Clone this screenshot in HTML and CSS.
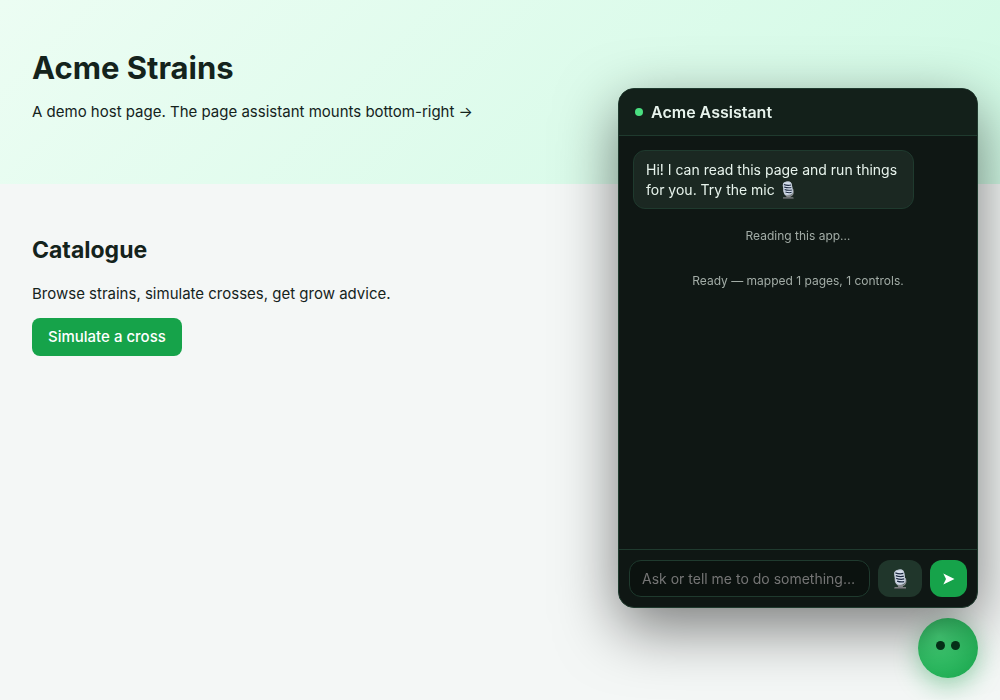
FILE: index.html
```html
<!DOCTYPE html>
<html lang="en">
<head>
    <meta charset="UTF-8">
    <meta name="viewport" content="width=device-width, initial-scale=1.0">
    <title>Acme Strains</title>
    <link rel="stylesheet" href="styles.css">
</head>
<body>

    <!-- Microphone symbol, used in the greeting and on the mic button -->
    <svg class="defs" width="0" height="0" aria-hidden="true">
        <symbol id="mic" viewBox="0 0 20 20">
            <path d="M5 9.500c.3 4.500 1.800 7 5.500 7.300 3.500.2 5.500-1.800 5.300-4.800l-.5-3" fill="none" stroke="#8a8c90" stroke-width="1.300"/>
            <path d="M8.500 15.500h4l.5 2.500H8z" fill="#85888b"/>
            <path d="M4.500 18h11.500v1.800H4.500z" fill="#7b7e80"/>
            <path d="M4.500 19h11.500v.8H4.500z" fill="#4c5052"/>
            <g transform="rotate(-9 10 8)">
                <rect x="4.800" y="0.600" width="10" height="15" rx="4" fill="#d5deeb"/>
                <path d="M6 3.200q4 2.200 8 1.800M6 6q4 2.200 8 1.800M6 8.800q4 2.200 8 1.800M6.500 11.600q3.500 2 7 1.600" fill="none" stroke="#1b2940" stroke-width="1.200"/>
                <rect x="5.200" y="1" width="9.200" height="14.200" rx="3.600" fill="none" stroke="#b9c3d1" stroke-width="0.800"/>
            </g>
        </symbol>
    </svg>

    <header class="hero">
        <h1>Acme Strains</h1>
        <p>A demo host page. The page assistant mounts bottom-right →</p>
    </header>

    <main class="catalogue">
        <h2>Catalogue</h2>
        <p>Browse strains, simulate crosses, get grow advice.</p>
        <button type="button" class="cta">Simulate a cross</button>
    </main>

    <!-- Assistant launcher -->
    <button type="button" class="orb" aria-label="Toggle assistant">
        <span class="eye"></span>
        <span class="eye"></span>
    </button>

    <!-- Assistant panel -->
    <section class="panel">
        <div class="panel-header">
            <span class="dot"></span>
            <span>Acme Assistant</span>
        </div>
        <div class="messages">
            <div class="bubble">Hi! I can read this page and run things for you. Try the mic <svg class="mic-inline" aria-hidden="true"><use href="#mic"/></svg></div>
            <div class="status">Reading this app…</div>
            <div class="status">Ready — mapped 1 pages, 1 controls.</div>
        </div>
        <form class="composer">
            <input type="text" class="ask" aria-label="Message" placeholder="Ask or tell me to do something…">
            <button type="button" class="mic-button" aria-label="Speak">
                <svg class="mic-icon" aria-hidden="true"><use href="#mic"/></svg>
            </button>
            <button type="submit" class="send-button" aria-label="Send">
                <svg width="12" height="12" viewBox="0 0 12 12" aria-hidden="true">
                    <path d="M0.300 0.500 11.500 6 0.300 11.500 3 6z" fill="#fff"/>
                </svg>
            </button>
        </form>
    </section>

</body>
</html>
```
FILE: styles.css
```css
body {
    font-family: Inter, "Liberation Sans", sans-serif;
    font-size: 15px;
    line-height: 19px;
    background-color: #f4f7f6;
    color: #14231c;
    margin: 0;
}
.defs {
    position: absolute;
}
.hero {
    padding: 48px 32px;
    background: linear-gradient(135deg, #ecfdf3, #d1fae5);
}
h1 {
    margin: 0;
    font-size: 31px;
    line-height: 40px;
}
h2 {
    margin: 20px 0 19px;
    font-size: 23px;
    line-height: 29px;
}
p {
    margin: 14px 0 15px;
}
.catalogue {
    padding: 32px;
    display: flow-root;
}
button {
    border: none;
    font-family: inherit;
    cursor: pointer;
}
.cta {
    padding: 10px 16px;
    border-radius: 8px;
    background-color: #16a34a;
    color: #fff;
    font-size: 15px;
    font-weight: 500;
    line-height: 18px;
}

/* Launcher */
.orb {
    position: fixed;
    right: 22px;
    bottom: 22px;
    width: 60px;
    height: 60px;
    padding: 0 0 5px;
    display: flex;
    align-items: center;
    justify-content: center;
    gap: 6px;
    border-radius: 50%;
    background: radial-gradient(circle at 35% 30%, #4ade80, #16a34a);
    box-shadow: 0 8px 24px rgba(22, 163, 74, 0.4);
}
.eye {
    width: 9px;
    height: 9px;
    border-radius: 50%;
    background-color: #06351b;
}

/* Panel */
.panel {
    position: fixed;
    right: 22px;
    bottom: 92px;
    width: 360px;
    height: 520px;
    box-sizing: border-box;
    display: flex;
    flex-direction: column;
    overflow: hidden;
    border: 1px solid #1f3a2e;
    border-radius: 16px;
    background-color: #0f1714;
    color: #e7f3ec;
    box-shadow: 0 20px 60px rgba(0, 0, 0, 0.5);
}
.panel-header {
    display: flex;
    align-items: center;
    gap: 8px;
    padding: 14px 16px;
    background-color: #13201a;
    border-bottom: 1px solid #1f3a2e;
    font-size: 16px;
    font-weight: 600;
    line-height: 18px;
}
.dot {
    width: 8px;
    height: 8px;
    border-radius: 50%;
    background-color: #4ade80;
}
.messages {
    flex: 1;
    display: flex;
    flex-direction: column;
    gap: 10px;
    padding: 14px;
}
.bubble {
    align-self: flex-start;
    max-width: 85%;
    box-sizing: border-box;
    padding: 9px 12px 8px;
    border: 1px solid #1f3a2e;
    border-radius: 12px;
    background-color: #1b2822;
    font-size: 14px;
    line-height: 20px;
}
.mic-inline {
    width: 18px;
    height: 18px;
    vertical-align: -4px;
}
.status {
    padding: 8px 12px 10px;
    text-align: center;
    font-size: 12px;
    line-height: 17px;
    color: #a2aca6;
}
.composer {
    display: flex;
    gap: 8px;
    padding: 10px;
    border-top: 1px solid #1f3a2e;
}
.ask {
    flex: 1;
    min-width: 0;
    height: 37px;
    box-sizing: border-box;
    padding: 0 12px;
    border: 1px solid #1f3a2e;
    border-radius: 12px;
    background-color: #0b120f;
    color: #e7f3ec;
    font-family: inherit;
    font-size: 14px;
}
.ask::placeholder {
    color: #757575;
}
.mic-button,
.send-button {
    display: flex;
    align-items: center;
    justify-content: center;
    padding: 0;
    border-radius: 12px;
}
.mic-button {
    width: 44px;
    background-color: #20362b;
}
.mic-icon {
    width: 20px;
    height: 20px;
}
.send-button {
    width: 37px;
    background-color: #16a34a;
}
```
